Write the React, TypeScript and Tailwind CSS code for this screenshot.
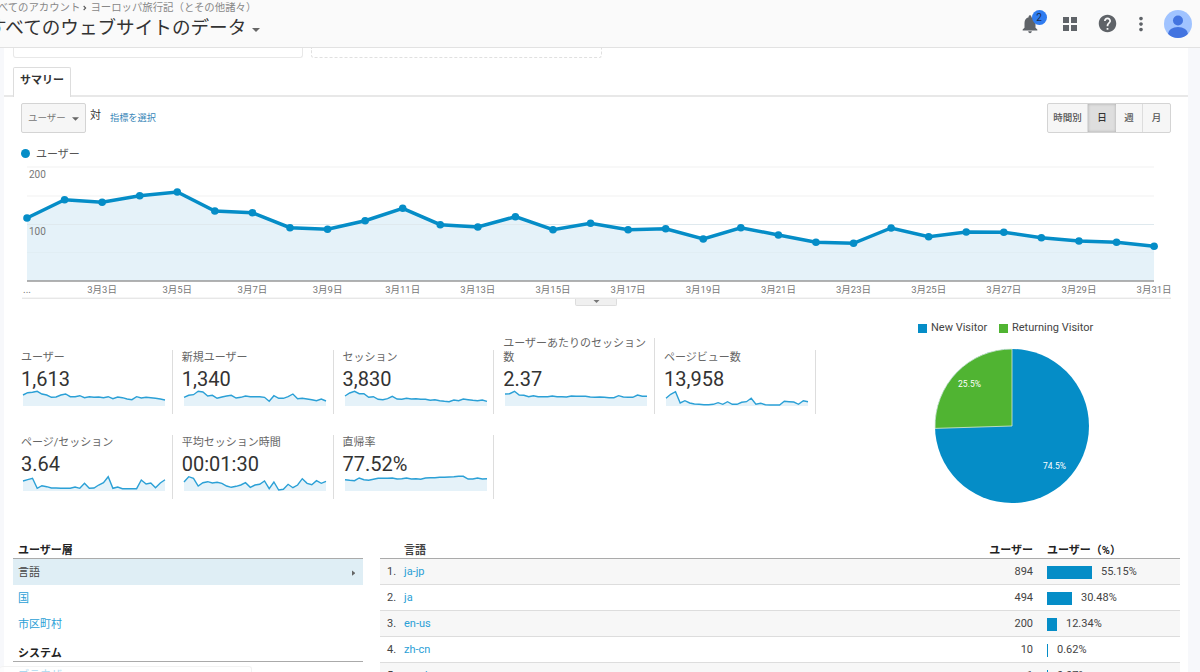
import React from "react";
import { MdNotifications, MdHelp, MdMoreVert } from "react-icons/md";

const pts = [218,199.7,202.3,195.7,192,211,212.7,227.7,229.3,220.7,208.3,224.7,227,216.7,229.7,223.3,229.7,228.7,239,227.7,235,242.3,243.3,228,236.7,232,232.3,237.7,241,242.3,246.3];
const px = (i: number) => 27 + i * 37.57;
const line = pts.map((y, i) => `${px(i).toFixed(1)},${y}`).join(" ");
const dates = [3,5,7,9,11,13,15,17,19,21,23,25,27,29,31];

function MainChart() {
  return (
    <svg viewBox="4 160 1184 139" className="block w-[1184px] h-[139px]">
      {[167, 196, 224.5].map((y) => <line key={y} x1="27" x2="1154" y1={y} y2={y} stroke="#f1f1f1" />)}
      <polygon points={`27,281 ${line} 1154,281`} fill="#e5f2f9" />
      <line x1="27" x2="1154" y1="224.5" y2="224.5" stroke="#dfe9ee" />
      <line x1="27" x2="1154" y1="252.5" y2="252.5" stroke="#e1eef4" />
      <line x1="27" x2="1154" y1="281" y2="281" stroke="#999" strokeWidth="1.5" />
      <polyline points={line} fill="none" stroke="#058dc7" strokeWidth="3.5" />
      {pts.map((y, i) => <circle key={i} cx={px(i)} cy={y} r="3.8" fill="#058dc7" />)}
      <text x="29" y="178" fontSize="10" fill="#777">200</text>
      <text x="29" y="235" fontSize="10" fill="#777">100</text>
      <text x="23" y="293" fontSize="10" fill="#777">...</text>
      {dates.map((d) => <text key={d} x={px(d - 1)} y="293" fontSize="9.5" fill="#777" textAnchor="middle">{`3月${d}日`}</text>)}
      <line x1="22" x2="1171" y1="298.2" y2="298.2" stroke="#ddd" />
    </svg>
  );
}

function Spark({ h }: { h: number[] }) {
  const l = h.map((v, i) => `${((i * 142) / (h.length - 1)).toFixed(1)},${(16 - v / 3).toFixed(1)}`).join(" ");
  return (
    <svg viewBox="0 0 142 16" className="block -mt-[1px] ml-[2px] w-[142px] h-[16px] overflow-visible">
      <polygon points={`0,16 ${l} 142,16`} fill="#e5f2f9" />
      <polyline points={l} fill="none" stroke="#2ba0d6" strokeWidth="1.4" />
    </svg>
  );
}

type Stat = { label: string; value: string; h: number[] };
const row1: Stat[] = [
  { label: "ユーザー", value: "1,613", h: [33,40,41,44,36,33,26,27,33,36,28,28,31,25,28,26,27,25,28,22,27,25,21,19,28,24,26,25,23,21,18] },
  { label: "新規ユーザー", value: "1,340", h: [26,32,34,44,42,30,32,23,27,30,32,24,26,30,28,28,28,26,14,31,23,23,28,36,22,23,21,19,16,21,15] },
  { label: "セッション", value: "3,830", h: [30,39,44,37,37,26,28,20,19,22,29,21,20,23,21,22,20,20,17,19,16,14,13,18,16,21,19,17,16,18,14] },
  { label: "ユーザーあたりのセッション数", value: "2.37", h: [36,37,44,33,32,28,31,28,28,28,30,28,28,27,30,29,29,29,27,26,27,26,25,25,31,27,26,26,33,29,29] },
  { label: "ページビュー数", value: "13,958", h: [23,35,43,9,16,9,6,5,4,4,5,10,5,13,5,5,11,13,23,5,8,4,3,3,3,14,13,12,5,16,13] },
];
const row2: Stat[] = [
  { label: "ページ/セッション", value: "3.64", h: [30,34,38,8,16,13,9,9,8,8,8,12,8,23,8,9,18,25,43,8,12,7,7,7,7,33,21,24,10,24,34] },
  { label: "平均セッション時間", value: "00:01:30", h: [27,43,38,15,25,28,24,26,23,15,11,14,18,25,11,18,20,30,7,27,3,5,20,10,18,37,23,19,31,23,29] },
  { label: "直帰率", value: "77.52%", h: [34,32,31,39,34,32,35,38,38,38,39,36,37,39,36,37,35,39,40,40,41,41,42,43,44,44,36,36,39,36,37] },
];

function StatCell({ s }: { s: Stat }) {
  const tall = s.label.length > 10;
  return (
    <div className="w-[160.75px] pl-[9px] pr-[6px] pb-[8px] border-r border-[#ddd]">
      <div className={tall ? "-mt-[1px] text-[11px] leading-[14px] text-[#666]" : "mt-[1px] text-[11px] leading-[14px] text-[#666]"}>{s.label}</div>
      <div className="mt-[2px] text-[20px] leading-[24px] text-[#333]">{s.value}</div>
      <Spark h={s.h} />
    </div>
  );
}

function Pie() {
  const cx = 78, cy = 78, r = 77;
  return (
    <svg viewBox="0 0 156 156" className="block w-[156px] h-[156px]">
      <circle cx={cx} cy={cy} r={r} fill="#058dc7" />
      <path d={`M${cx},${cy} L${cx},${cy - r} A${r},${r} 0 0 0 ${cx - r + 0.04},${cy + 2.4} Z`} fill="#50b432" stroke="#dcebd6" strokeWidth="0.8" />
      <text x="35.5" y="39" fontSize="8.5" fill="#fff" textAnchor="middle">25.5%</text>
      <text x="120.5" y="121" fontSize="8.5" fill="#fff" textAnchor="middle">74.5%</text>
    </svg>
  );
}

const tableRows = [
  { n: "1.", name: "ja-jp", v: "894", w: "w-[45px]", p: "55.15%" },
  { n: "2.", name: "ja", v: "494", w: "w-[25px]", p: "30.48%" },
  { n: "3.", name: "en-us", v: "200", w: "w-[10px]", p: "12.34%" },
  { n: "4.", name: "zh-cn", v: "10", w: "w-[1px]", p: "0.62%" },
  { n: "5.", name: "en-gb", v: "1", w: "w-[1px]", p: "0.07%" },
];

function SideHead({ children }: { children: React.ReactNode }) {
  return <div className="h-[18px] pl-[5px] text-[11px] leading-[19px] font-bold text-[#222] border-b-[1.5px] border-[#aaa]">{children}</div>;
}
function SideLink({ children }: { children: React.ReactNode }) {
  return <div className="h-[26px] pl-[5px] text-[11px] leading-[27px] text-[#2ba0d6]">{children}</div>;
}

export default function App() {
  return (
    <div className="relative w-[1200px] h-[672px] overflow-hidden flex flex-col bg-[#f7f8fb] font-['Roboto','Noto_Sans_CJK_JP',sans-serif]">
      <header className="h-[48px] shrink-0 flex bg-[#fafafa] border-b border-[#e2e2e2]">
        <div className="-ml-[12px] flex-1 min-w-0">
          <div className="h-[15px] pt-[1px] flex items-center text-[10.4px] leading-[14px] text-[#888]">
            <span>すべてのアカウント</span>
            <svg viewBox="0 0 6 8" className="mx-[3px] w-[4px] h-[6px]"><path d="M1 1l3 3-3 3" fill="none" stroke="#555" strokeWidth="1.6" /></svg>
            <span>ヨーロッパ旅行記（とその他諸々）</span>
          </div>
          <div className="mt-[1px] flex items-center text-[18.6px] leading-[24px] text-[#333]">
            <span>すべてのウェブサイトのデータ</span>
            <svg viewBox="0 0 8 4" className="ml-[6px] mt-[3px] w-[8px] h-[4px]"><path d="M0 0h8L4 4z" fill="#666" /></svg>
          </div>
        </div>
        <div className="flex items-center pr-[8px] text-[#5f6368]">
          <div className="relative w-[22px] h-[22px] mr-[22px]">
            <MdNotifications className="w-[22px] h-[22px]" />
            <span className="absolute -top-[2.5px] left-[12.5px] w-[15px] h-[15px] rounded-full bg-[#2f7cf0] text-[10px] leading-[15px] text-center text-[#1a2a4a]">2</span>
          </div>
          <svg viewBox="0 0 14 14" className="w-[14px] h-[14px] mr-[20px]">
            <path d="M0 0h6v6H0zM8 0h6v6H8zM0 8h6v6H0zM8 8h6v6H8z" fill="#5f6368" />
          </svg>
          <MdHelp className="w-[21px] h-[21px] mr-[12px]" />
          <MdMoreVert className="w-[22px] h-[22px] mr-[12px]" />
          <svg viewBox="0 0 28 28" className="w-[28px] h-[28px]">
            <defs><clipPath id="av"><circle cx="14" cy="14" r="14" /></clipPath></defs>
            <circle cx="14" cy="14" r="14" fill="#a0c3ff" />
            <g clipPath="url(#av)" fill="#4374e0"><circle cx="14" cy="10.5" r="5" /><ellipse cx="14" cy="24" rx="10" ry="7" /></g>
          </svg>
        </div>
      </header>

      <main className="ml-[4px] w-[1184px] flex-1 min-h-0 overflow-hidden bg-white">
        <div className="flex pl-[9px] gap-[8px]">
          <div className="w-[290px] h-[10px] bg-white border border-t-0 border-[#e8e8e8] rounded-b-[3px]" />
          <div className="w-[291px] h-[10px] bg-white border border-t-0 border-dashed border-[#e0e0e0] rounded-b-[3px]" />
        </div>

        <div className="mt-[9px] pl-[9px] h-[30px] border-b-2 border-[#e8e8e8] flex">
          <div className="w-[58px] h-[30px] border border-b-0 border-[#ddd] rounded-t-[2px] bg-white text-[11px] leading-[26px] font-bold text-[#333] text-center">サマリー</div>
        </div>

        <div className="mt-[6px] h-[30px] pl-[17px] pr-[17px] flex items-start">
          <div className="w-[65px] h-[30px] flex items-center justify-between pl-[6px] pr-[6px] pt-[1px] border border-[#d4d4d4] rounded-[2px] bg-[#f6f6f6] text-[9.5px] text-[#777]">
            <span>ユーザー</span>
            <svg viewBox="0 0 8 4" className="w-[7px] h-[4px]"><path d="M0 0h8L4 4z" fill="#666" /></svg>
          </div>
          <span className="ml-[4px] mt-[5px] text-[11px] leading-[16px] text-[#333]">対</span>
          <span className="ml-[9px] mt-[8px] text-[9.2px] leading-[14px] text-[#3a87b8]">指標を選択</span>
          <div className="ml-auto flex h-[30px] border border-[#d4d4d4] rounded-[2px] bg-[#f6f6f6] text-[9.5px] font-medium leading-[28px] text-center text-[#555]">
            <div className="w-[40px] border-r border-[#ddd]">時間別</div>
            <div className="w-[28px] bg-[#dedede] shadow-[inset_0_0_3px_#aaa] text-[#333]">日</div>
            <div className="w-[27px] border-r border-[#ddd]">週</div>
            <div className="w-[27px]">月</div>
          </div>
        </div>

        <div className="mt-[17px] h-[10px] pl-[17px] flex items-center text-[11px] text-[#555]">
          <span className="w-[9px] h-[9px] -translate-y-[2px] rounded-full bg-[#058dc7] mr-[6px]" />
          ユーザー
        </div>

        <MainChart />
        <div className="mx-auto w-[42px] h-[7px] bg-[#f0f0f0] border border-t-0 border-[#ddd] rounded-b-[2px] flex justify-center pt-[1px]">
          <svg viewBox="0 0 8 4" className="w-[7px] h-[3px]"><path d="M0 0h8L4 4z" fill="#777" /></svg>
        </div>

        <div className="mt-[15px] h-[220px] flex items-start">
          <div className="ml-[8px] mt-[17px] w-[810px] shrink-0">
            <div className="flex items-end">{row1.map((s) => <StatCell key={s.label} s={s} />)}</div>
            <div className="mt-[21px] flex items-end">{row2.map((s) => <StatCell key={s.label} s={s} />)}</div>
          </div>
          <div className="ml-[96px] w-[200px]">
            <div className="h-[14px] flex items-center text-[11px] text-[#444]">
              <span className="w-[9px] h-[9px] bg-[#058dc7] mr-[4px]" />
              <span className="w-[68px]">New Visitor</span>
              <span className="w-[9px] h-[9px] bg-[#50b432] mr-[4px]" />
              <span>Returning Visitor</span>
            </div>
            <div className="mt-[13px] ml-[16px]"><Pie /></div>
          </div>
        </div>

        <div className="flex pl-[9px] gap-[17px]">
          <div className="w-[350px] shrink-0">
            <SideHead>ユーザー層</SideHead>
            <div className="h-[26px] pl-[5px] pr-[8px] pt-[2px] flex items-center justify-between bg-[#dfeef5] text-[11px] text-[#444]">
              <span>言語</span>
              <svg viewBox="0 0 4 6" className="w-[3.5px] h-[6px]"><path d="M0 0l4 3-4 3z" fill="#666" /></svg>
            </div>
            <SideLink>国</SideLink>
            <SideLink>市区町村</SideLink>
            <div className="mt-[7px]"><SideHead>システム</SideHead></div>
            <SideLink>ブラウザ</SideLink>
          </div>
          <div className="w-[800px] shrink-0">
            <div className="h-[18px] flex text-[11px] leading-[19px] font-bold text-[#222] border-b-[1.5px] border-[#aaa]">
              <span className="ml-[24px] text-[#444]">言語</span>
              <span className="ml-auto">ユーザー</span>
              <span className="ml-[14px] w-[133px]">ユーザー（%）</span>
            </div>
            {tableRows.map((r, i) => (
              <div key={r.n} className={i % 2 === 0 ? "h-[26px] pt-[2px] flex items-center border-b border-[#ddd] bg-[#f7f7f7] text-[11px] text-[#444]" : "h-[26px] pt-[2px] flex items-center border-b border-[#ddd] bg-white text-[11px] text-[#444]"}>
                <span className="ml-[7px] w-[17px]">{r.n}</span>
                <span className="text-[#2ba0d6]">{r.name}</span>
                <span className="ml-auto">{r.v}</span>
                <div className="ml-[14px] w-[133px] flex items-center">
                  <span className={`${r.w} h-[13px] bg-[#058dc7] mr-[9px]`} />
                  <span>{r.p}</span>
                </div>
              </div>
            ))}
          </div>
        </div>
      </main>
      <div className="absolute left-0 top-[666px] w-[252px] h-[6px] rounded-t-[3px] bg-white/60 border-t border-r border-[#f2f2f2]" />
    </div>
  );
}
